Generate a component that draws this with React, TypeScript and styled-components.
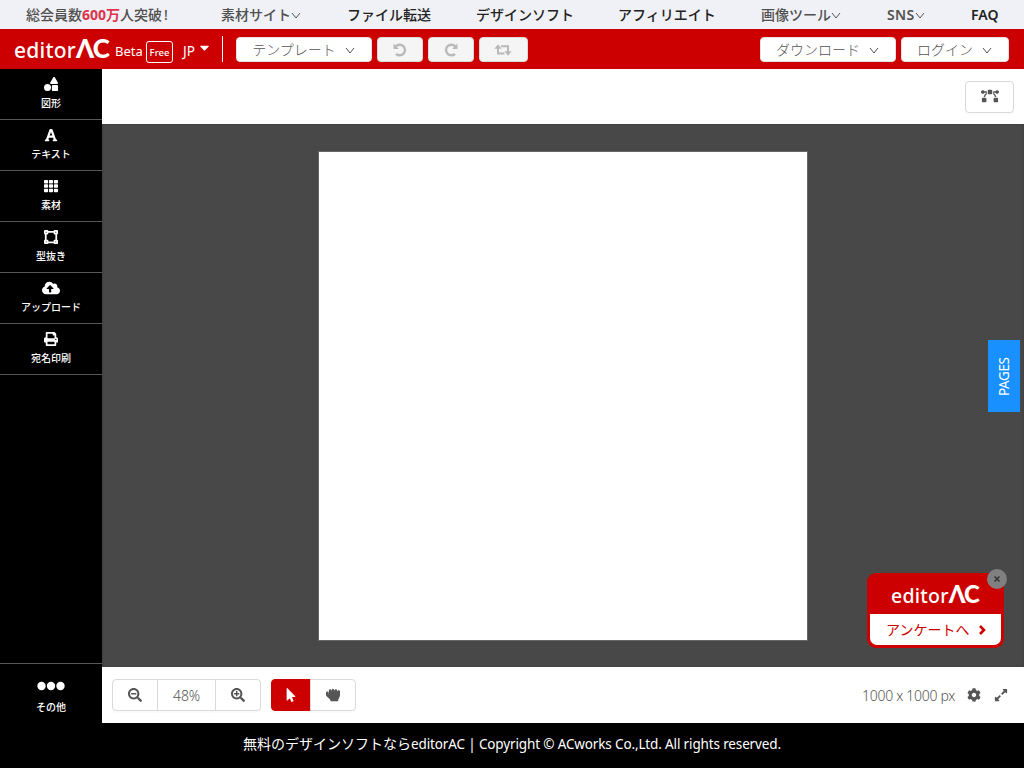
import React from "react";
import styled, { createGlobalStyle } from "styled-components";
import {
  FaShapes, FaFont, FaTh, FaVectorSquare, FaCloudUploadAlt, FaPrint, FaSearchMinus, FaSearchPlus,
  FaMousePointer, FaHandRock, FaCog, FaExpandAlt, FaBezierCurve, FaCaretDown,
} from "react-icons/fa";

const Global = createGlobalStyle`
  * { box-sizing: border-box; }
  body { margin: 0; overflow: hidden; }
  body, button { font-family: "Noto Sans", "Noto Sans CJK JP", sans-serif; }
  button { padding: 0; cursor: pointer; }
  svg { display: block; flex: none; }
`;

const Page = styled.div`
  width: 1024px;
  height: 768px;
  display: flex;
  flex-direction: column;
  background: #000;
`;

const TopNav = styled.nav`
  height: 29px;
  flex: none;
  padding-left: 26px;
  background: #f0f1f6;
  display: grid;
  grid-template-columns: 195px 126px 129px 142px 143px 126px 84px 1fr;
  align-items: center;
`;

const NavItem = styled.a<{ $muted?: boolean; $spacing?: number }>`
  display: flex;
  align-items: center;
  color: ${(p) => (p.$muted ? "#505050" : "#222")};
  font-size: 14px;
  line-height: 28px;
  font-weight: 500;
  letter-spacing: ${(p) => p.$spacing ?? 0}px;
  white-space: nowrap;
`;

const Strong = styled.span`
  font-weight: 600;
`;

const Bang = styled.span`
  margin-left: 2px;
`;

const Members = styled.b`
  color: #dc354b;
  font-weight: 700;
`;

const Header = styled.header`
  height: 40px;
  flex: none;
  padding: 0 15px 0 14px;
  display: flex;
  align-items: center;
  background: #cc0000;
  color: #fff;
`;

const Logo = styled.div<{ $size: number; $width: number }>`
  width: ${(p) => p.$width}px;
  padding-top: 2px;
  display: flex;
  align-items: baseline;
  color: #fff;
  font-size: ${(p) => p.$size}px;
  line-height: 30px;
  font-weight: 500;
  letter-spacing: 0.25px;
  white-space: nowrap;
`;

const LogoMark = styled.span<{ $size: number }>`
  font: 900 ${(p) => p.$size}px/20px Lato, sans-serif;
  letter-spacing: -1.6px;
`;

const Beta = styled.span`
  margin: 3px 0 0 5px;
  font-size: 13px;
  width: 31px;
`;

const Free = styled.span`
  width: 27px;
  height: 22px;
  margin-top: 6px;
  border: 1px solid #fff;
  border-radius: 3px;
  font-size: 9.5px;
  font-weight: 500;
  line-height: 21px;
  text-align: center;
`;

const Language = styled.div`
  width: 39px;
  margin: 3px 0 0 10px;
  display: flex;
  align-items: center;
  gap: 2px;
  font-size: 13.5px;
  svg { margin-top: -6px; }
`;

const Divider = styled.span`
  width: 1px;
  height: 26px;
  background: #fff;
  margin-right: 13px;
`;

const HeaderButton = styled.button<{ $width: number; $disabled?: boolean }>`
  width: ${(p) => p.$width}px;
  height: 25px;
  margin: 1px 5px 0 0;
  border: 1px solid ${(p) => (p.$disabled ? "#d9d9d9" : "#e3e3e3")};
  border-radius: 4px;
  background: ${(p) => (p.$disabled ? "#f5f5f5" : "#fff")};
  color: ${(p) => (p.$disabled ? "#b9b9b9" : "#555")};
  display: flex;
  align-items: center;
  justify-content: center;
  gap: 9px;
  padding-right: 1px;
  font-size: 14px;
  line-height: 22px;
  font-weight: 300;
  &:last-child { margin-right: 0; }
`;

const Spacer = styled.span`
  flex: 1;
`;

const Body = styled.div`
  height: 654px;
  flex: none;
  display: flex;
`;

const Sidebar = styled.aside`
  width: 102px;
  flex: none;
  display: flex;
  flex-direction: column;
  justify-content: space-between;
`;

const Tool = styled.button<{ $last?: boolean }>`
  width: 102px;
  height: ${(p) => (p.$last ? 60 : 51)}px;
  border: 0;
  border-${(p) => (p.$last ? "top" : "bottom")}: 1px solid #555;
  background: #000;
  color: #fff;
  display: flex;
  flex-direction: column;
  align-items: center;
  padding-top: ${(p) => (p.$last ? 14 : 7)}px;
  font-size: 10px;
  line-height: 15px;
  gap: ${(p) => (p.$last ? 7 : 5)}px;
  font-weight: 500;
`;

const IconSlot = styled.span`
  height: 15px;
  display: flex;
  align-items: center;
`;

const Workspace = styled.main`
  flex: 1;
  display: flex;
  flex-direction: column;
`;

const OptionsBar = styled.div`
  height: 55px;
  flex: none;
  background: #fff;
  padding: 12px 10px;
  display: flex;
  justify-content: flex-end;
`;

const BezierButton = styled.button`
  width: 49px;
  height: 32px;
  border: 1px solid #d9d9d9;
  border-radius: 4px;
  background: #fff;
  color: #555;
  display: flex;
  align-items: center;
  justify-content: center;
  padding-bottom: 2px;
  box-shadow: 0 2px 0 rgba(0, 0, 0, 0.015);
`;

const Stage = styled.section`
  position: relative;
  height: 543px;
  background: #484848;
  box-shadow: inset 0 0 2px #333;
  display: flex;
  justify-content: center;
  padding: 28px 0 0;
`;

const Artboard = styled.div`
  width: 488px;
  height: 488px;
  background: #fff;
  box-shadow: 0 0 0 1px #666;
`;

const PagesTab = styled.button`
  position: absolute;
  right: 4px;
  top: 216px;
  width: 32px;
  height: 72px;
  border: 0;
  background: #1890ff;
  color: #fff;
  font-size: 13.5px;
  writing-mode: vertical-rl;
  transform: rotate(180deg);
  text-align: center;
  line-height: 32px;
  letter-spacing: -0.4px;
  padding-bottom: 2px;
`;

const Survey = styled.div`
  position: absolute;
  right: 20px;
  top: 449px;
  width: 137px;
  height: 75px;
  padding: 0 3px 3px;
  border-radius: 9px;
  background: #cc0000;
  display: flex;
  flex-direction: column;
`;

const SurveyBrand = styled.div`
  height: 41px;
  padding: 6px 0 0 21px;
`;

const SurveyLink = styled.a`
  height: 31px;
  border-radius: 0 0 7px 7px;
  background: #fff;
  color: #c00;
  display: flex;
  align-items: center;
  padding: 0 0 2px 16px;
  gap: 9px;
  font-size: 14px;
  svg { margin-top: 3px; }
`;

const Close = styled.button`
  position: absolute;
  right: -3px;
  top: -4px;
  width: 20px;
  height: 20px;
  border: 0;
  border-radius: 50%;
  background: #808080;
  display: flex;
  align-items: center;
  justify-content: center;
`;

const BottomBar = styled.div`
  height: 56px;
  background: #fff;
  color: #555;
  padding: 0 10px;
  display: flex;
  align-items: center;
`;

const Group = styled.div`
  display: flex;
  margin-right: 10px;
`;

const GroupButton = styled.button<{ $width: number; $active?: boolean }>`
  width: ${(p) => p.$width}px;
  height: 32px;
  border: 1px solid ${(p) => (p.$active ? "#c00" : "#d9d9d9")};
  margin-left: -1px;
  background: ${(p) => (p.$active ? "#c00" : "#fff")};
  color: ${(p) => (p.$active ? "#fff" : "#555")};
  display: flex;
  align-items: center;
  justify-content: center;
  font-size: 14px;
  font-weight: 300;
  letter-spacing: -0.2px;
  box-shadow: 0 2px 0 rgba(0, 0, 0, 0.015);
  &:first-child { border-radius: 4px 0 0 4px; margin-left: 0; }
  &:last-child { border-radius: 0 4px 4px 0; }
`;

const CanvasSize = styled.span`
  margin-left: auto;
  margin-right: 12px;
  padding-top: 1px;
  color: #555;
  font-size: 14px;
  font-weight: 300;
  letter-spacing: -0.3px;
`;

const BarIcon = styled.span`
  width: 14px;
  margin-right: 13px;
  &:last-child { margin-right: 6px; }
`;

const Footer = styled.footer`
  height: 45px;
  display: flex;
  align-items: baseline;
  justify-content: center;
  color: #fff;
  font-size: 14px;
  line-height: 42px;
  white-space: nowrap;
`;

const Copyright = styled.span`
  font-size: 13.5px;
  letter-spacing: -0.14px;
`;

const Chevron = () => (
  <svg width="10" height="10" viewBox="0 0 10 10" fill="none" stroke="#555" strokeWidth="1">
    <path d="M1 3 5 8 9 3" />
  </svg>
);

const Rotate = ({ flip }: { flip?: boolean }) => (
  <svg width="14" height="14" viewBox="0 0 14 14">
    <g transform={flip ? "translate(14 0) scale(-1 1)" : undefined}>
      <path d="M2.8 3.4A5.3 5.3 0 1 1 3 10.8" fill="none" stroke="currentColor" strokeWidth="2.4" />
      <path d="M.5.5V6h5.4z" fill="currentColor" />
    </g>
  </svg>
);

const Retweet = () => (
  <svg width="18" height="12" viewBox="0 0 18 12" fill="none" stroke="currentColor" strokeWidth="2">
    <path d="M4 3v6.6h6.4M7 2.3h7V9" />
    <path d="M4 .2 7.6 4.8H.4zM14 11.8 10.4 7.2h7.2z" fill="currentColor" stroke="none" />
  </svg>
);

const BoldChevron = () => (
  <svg width="9" height="10" viewBox="0 0 9 10" fill="none" stroke="currentColor" strokeWidth="2.6">
    <path d="m2 1 4 4-4 4" />
  </svg>
);

const Dots = () => (
  <svg width="28" height="10" viewBox="0 0 28 10" fill="#fff">
    <circle cx="4.5" cy="5" r="4.2" /><circle cx="14" cy="5" r="4.2" /><circle cx="23.5" cy="5" r="4.2" />
  </svg>
);

const tools = [
  { label: "図形", icon: <FaShapes size={14} /> },
  { label: "テキスト", icon: <FaFont size={14} /> },
  { label: "素材", icon: <FaTh size={14} /> },
  { label: "型抜き", icon: <FaVectorSquare size={14} /> },
  { label: "アップロード", icon: <FaCloudUploadAlt size={18} /> },
  { label: "宛名印刷", icon: <FaPrint size={14} /> },
];

export default function App() {
  return (
    <Page>
      <Global />
      <TopNav>
        <NavItem $muted><span>総会員数<Members>600万</Members>人突破<Bang>!</Bang></span></NavItem>
        <NavItem $muted>素材サイト<Chevron /></NavItem>
        <NavItem>ファイル転送</NavItem>
        <NavItem>デザインソフト</NavItem>
        <NavItem>アフィリエイト</NavItem>
        <NavItem $muted>画像ツール<Chevron /></NavItem>
        <NavItem $muted $spacing={0.4}><Strong>SNS</Strong><Chevron /></NavItem>
        <NavItem><Strong>FAQ</Strong></NavItem>
      </TopNav>
      <Header>
        <Logo $size={21} $width={96}><span>editor</span><LogoMark $size={26}>ΛC</LogoMark></Logo>
        <Beta>Beta</Beta>
        <Free>Free</Free>
        <Language>JP <FaCaretDown size={15} /></Language>
        <Divider />
        <HeaderButton $width={136}>テンプレート<Chevron /></HeaderButton>
        <HeaderButton $width={46} $disabled><Rotate /></HeaderButton>
        <HeaderButton $width={46} $disabled><Rotate flip /></HeaderButton>
        <HeaderButton $width={49} $disabled><Retweet /></HeaderButton>
        <Spacer />
        <HeaderButton $width={136}>ダウンロード<Chevron /></HeaderButton>
        <HeaderButton $width={108}>ログイン<Chevron /></HeaderButton>
      </Header>
      <Body>
        <Sidebar>
          <div>
            {tools.map((t) => (
              <Tool key={t.label}><IconSlot>{t.icon}</IconSlot>{t.label}</Tool>
            ))}
          </div>
          <Tool $last><IconSlot><Dots /></IconSlot>その他</Tool>
        </Sidebar>
        <Workspace>
          <OptionsBar><BezierButton><FaBezierCurve size={18} /></BezierButton></OptionsBar>
          <Stage>
            <Artboard />
            <PagesTab>PAGES</PagesTab>
            <Survey>
              <SurveyBrand>
                <Logo $size={19.5} $width={88}><span>editor</span><LogoMark $size={24}>ΛC</LogoMark></Logo>
              </SurveyBrand>
              <SurveyLink>アンケートへ<BoldChevron /></SurveyLink>
              <Close>
                <svg width="6" height="6" viewBox="0 0 6 6" stroke="#333" strokeWidth="1.5"><path d="m.5.5 5 5M5.5.5l-5 5" /></svg>
              </Close>
            </Survey>
          </Stage>
          <BottomBar>
            <Group>
              <GroupButton $width={46}><FaSearchMinus size={14} /></GroupButton>
              <GroupButton $width={59}>48%</GroupButton>
              <GroupButton $width={46}><FaSearchPlus size={14} /></GroupButton>
            </Group>
            <Group>
              <GroupButton $width={40} $active><FaMousePointer size={14} /></GroupButton>
              <GroupButton $width={46}><FaHandRock size={14} /></GroupButton>
            </Group>
            <CanvasSize>1000 x 1000 px</CanvasSize>
            <BarIcon><FaCog size={14} /></BarIcon>
            <BarIcon><FaExpandAlt size={14} /></BarIcon>
          </BottomBar>
        </Workspace>
      </Body>
      <Footer>
        <span>無料のデザインソフトなら</span>
        <Copyright>editorAC | Copyright © ACworks Co.,Ltd. All rights reserved.</Copyright>
      </Footer>
    </Page>
  );
}
